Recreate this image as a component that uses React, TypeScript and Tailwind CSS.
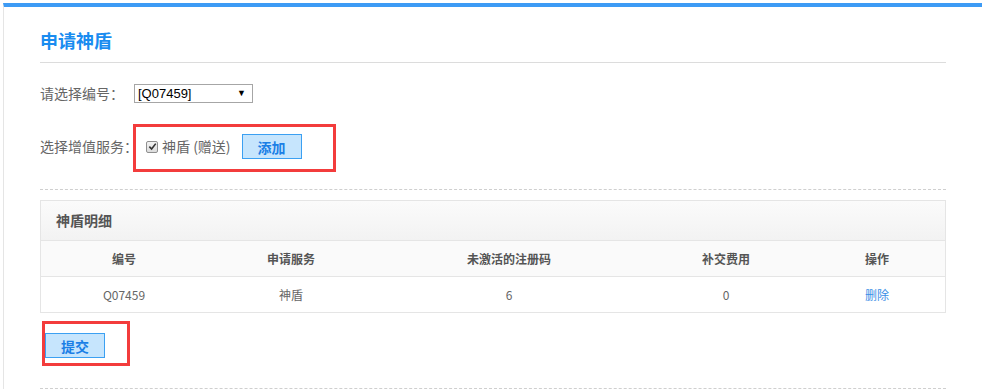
const rows = [{ id: "Q07459", service: "神盾", codes: "6", fee: "0" }]

const cols = [
  { label: "编号", w: "w-[166px]" },
  { label: "申请服务", w: "w-[168px]" },
  { label: "未激活的注册码", w: "w-[268px]" },
  { label: "补交费用", w: "w-[166px]" },
  { label: "操作", w: "w-[136px]" },
]

function BlueButton({ children }: { children: React.ReactNode }) {
  return (
    <button className="w-[60px] h-[25px] bg-[#c6e5fd] border border-[#3ba0f2] text-[#1b7fe6] text-[14px] font-bold leading-none flex items-center justify-center">
      {children}
    </button>
  )
}

export default function App() {
  return (
    <div className="relative w-[982px] h-[389px] bg-white pt-[3px] pl-[3px] overflow-hidden font-['Noto_Sans_CJK_SC',sans-serif]">
      <div className="h-full border-t-4 border-t-[#3d9bf5] border-l border-l-[#e5e5e5] pl-[36px]">
        <div className="w-[906px]">
          <div className="h-[56px] pt-[21px] border-b border-[#dcdcdc]">
            <h1 className="text-[18px] leading-[24px] font-bold text-[#1a8cf0]">申请神盾</h1>
          </div>

          <div className="mt-[21px] h-[19px] flex items-center text-[14px] text-[#666]">
            <span>请选择编号：</span>
            <div className="ml-[10px] w-[119px] h-[19px] border border-[#a6a6a6] flex items-center justify-between pl-[3px] pr-[6px] font-['Liberation_Sans',sans-serif] text-[13px] text-black">
              <span>[Q07459]</span>
              <span className="text-[9px]">▼</span>
            </div>
          </div>

          <div className="mt-[31px] h-[25px] flex items-center text-[14px] text-[#666]">
            <span>选择增值服务：</span>
            <span className="ml-[8px] w-[12px] h-[12px] border border-[#8f8f8f] rounded-[2px] bg-gradient-to-b from-[#f2f2f2] to-[#dcdcdc] flex items-center justify-center">
              <svg width="9" height="9" viewBox="0 0 10 10">
                <path d="M1.5 5.2 L4 7.8 L8.6 1.8" fill="none" stroke="#333" strokeWidth="1.8" />
              </svg>
            </span>
            <span className="ml-[4px]">神盾 (赠送)</span>
            <span className="ml-[11px]">
              <BlueButton>添加</BlueButton>
            </span>
          </div>

          <div className="mt-[30px] border-t border-dashed border-[#cfcfcf]" />

          <div className="mt-[10px] border border-[#e5e5e5]">
            <div className="h-[40px] flex items-center pl-[15px] bg-gradient-to-b from-[#fbfbfb] to-[#f2f2f2] border-b border-[#e5e5e5] text-[14px] font-bold text-[#555]">
              神盾明细
            </div>
            <div className="h-[36px] flex items-center bg-[#fafafa] border-b border-[#e5e5e5] text-[12px] font-bold text-[#555]">
              {cols.map((c) => (
                <div key={c.label} className={`${c.w} text-center`}>
                  {c.label}
                </div>
              ))}
            </div>
            {rows.map((r) => (
              <div key={r.id} className="h-[35px] flex items-center text-[12px] text-[#666]">
                <div className="w-[166px] text-center">{r.id}</div>
                <div className="w-[168px] text-center">{r.service}</div>
                <div className="w-[268px] text-center">{r.codes}</div>
                <div className="w-[166px] text-center">{r.fee}</div>
                <div className="w-[136px] text-center text-[#3a8ee6]">删除</div>
              </div>
            ))}
          </div>

          <div className="mt-[20px] ml-[5px]">
            <BlueButton>提交</BlueButton>
          </div>

          <div className="mt-[30px] border-t border-dashed border-[#cfcfcf]" />
        </div>
      </div>

      <div className="absolute left-[133px] top-[124px] w-[203px] h-[48px] border-[3px] border-[#f33c3c]" />
      <div className="absolute left-[42px] top-[321px] w-[88px] h-[45px] border-[3px] border-[#f33c3c]" />
    </div>
  )
}
